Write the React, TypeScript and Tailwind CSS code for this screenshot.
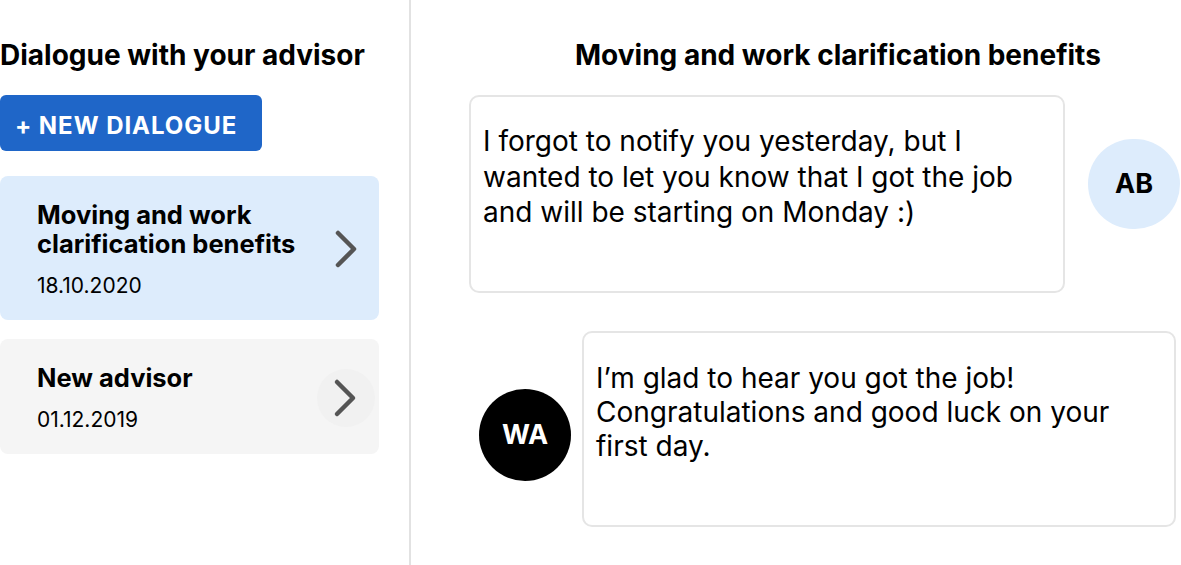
import React from 'react';

interface Dialogue {
  id: number;
  title: string;
  date: string;
  active: boolean;
}

const dialogues: Dialogue[] = [
  { id: 1, title: 'Moving and work clarification benefits', date: '18.10.2020', active: true },
  { id: 2, title: 'New advisor', date: '01.12.2019', active: false },
];

function Chevron() {
  return (
    <svg width="26" height="40" viewBox="0 0 26 40" fill="none" className="block">
      <path d="M4 4 L20 20 L4 36" stroke="#555555" strokeWidth="4.5" strokeLinecap="round" strokeLinejoin="round" />
    </svg>
  );
}

export default function App() {
  return (
    <div className="flex h-[565px] w-[1181px] overflow-hidden bg-white font-['Inter',sans-serif] text-black">
      {/* Sidebar */}
      <aside className="w-[409px] shrink-0 pr-[30px] pt-[37px]">
        <h2 className="whitespace-nowrap text-[28px] font-bold leading-[36px]">Dialogue with your advisor</h2>
        <button className="mt-[22px] flex h-[56px] w-[262px] items-center rounded-[6px] bg-[#1f66c8] pl-[15px] pt-[5px] text-[24px] font-bold tracking-[0.95px] text-white">
          + NEW DIALOGUE
        </button>
        <div className="mt-[25px] flex flex-col gap-[19px]">
          {dialogues.map(d => (
            <div
              key={d.id}
              className={`flex items-center justify-between rounded-[8px] pb-[22px] pl-[37px] pr-[4px] pt-[24px] ${
                d.active ? 'bg-[#ddecfc]' : 'bg-[#f5f5f5]'
              }`}
            >
              <div>
                <h3 className="max-w-[290px] text-[25.5px] font-bold leading-[29px]">{d.title}</h3>
                <p className="mt-[16px] text-[21px] leading-[24px]">{d.date}</p>
              </div>
              <div
                className={`flex h-[58px] w-[58px] items-center justify-center rounded-full ${
                  d.active ? '' : 'bg-[#f1f1f1]'
                }`}
              >
                <Chevron />
              </div>
            </div>
          ))}
        </div>
      </aside>

      <div className="w-[2px] shrink-0 bg-[#e2e2e2]" />

      {/* Conversation */}
      <main className="flex-1 pl-[58px] pt-[37px]">
        <h1 className="whitespace-nowrap pl-[106px] text-[28px] font-bold leading-[36px]">
          Moving and work clarification benefits
        </h1>
        <div className="mt-[22px] flex items-start gap-[23px]">
          <div className="h-[198px] w-[596px] shrink-0 rounded-[10px] border-2 border-[#e5e5e5] pl-[12px] pr-[13px] pt-[27px] text-[28px] leading-[35.5px]">
            I forgot to notify you yesterday, but I wanted to let you know that I got the job and will be starting on Monday :)
          </div>
          <div className="mt-[44px] flex h-[90px] w-[92px] shrink-0 items-center justify-center rounded-full bg-[#ddecfc] text-[27px] font-bold">
            AB
          </div>
        </div>
        <div className="mt-[38px] flex items-start gap-[11px] pl-[10px]">
          <div className="mt-[58px] flex h-[92px] w-[92px] shrink-0 items-center justify-center rounded-full bg-black text-[27px] font-bold text-white">
            WA
          </div>
          <div className="h-[196px] w-[594px] shrink-0 rounded-[10px] border-2 border-[#e5e5e5] pl-[12px] pr-[13px] pt-[28px] text-[28px] leading-[34px]">
            I’m glad to hear you got the job! Congratulations and good luck on your first day.
          </div>
        </div>
      </main>
    </div>
  );
}
